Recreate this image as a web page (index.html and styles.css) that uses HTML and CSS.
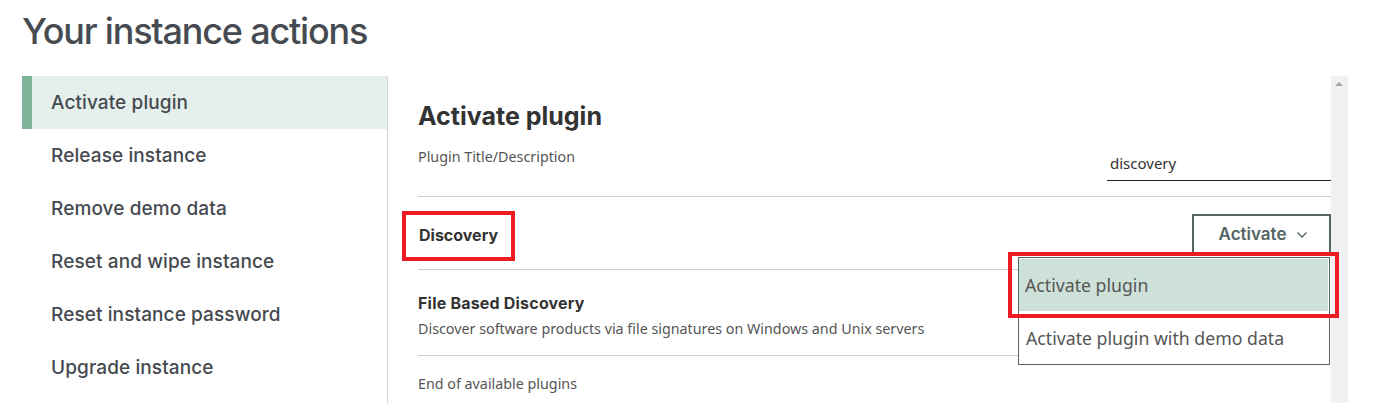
FILE: index.html
```html
<!DOCTYPE html>
<html>
<head>
<meta charset="utf-8">
<link rel="stylesheet" href="styles.css">
</head>
<body>
<h1 class="page-title">Your instance actions</h1>
<div class="layout">
  <nav class="sidebar">
    <div class="nav-item active">Activate plugin</div>
    <div class="nav-item">Release instance</div>
    <div class="nav-item">Remove demo data</div>
    <div class="nav-item">Reset and wipe instance</div>
    <div class="nav-item">Reset instance password</div>
    <div class="nav-item">Upgrade instance</div>
  </nav>
  <section class="panel">
    <div class="content">
      <h2 class="panel-title">Activate plugin</h2>
      <div class="filter-row">
        <label class="filter-label">Plugin Title/Description</label>
        <div class="filter-input">discovery</div>
      </div>
      <div class="group-row">
        <span class="group-name">Discovery</span>
        <div class="action-wrap">
          <button class="activate-btn">Activate
            <svg class="chev" width="12" height="8" viewBox="0 0 12 8"><path d="M1.5 1.5 L6 6 L10.5 1.5" fill="none" stroke="#556565" stroke-width="1.4"/></svg>
          </button>
          <ul class="menu">
            <li class="menu-item selected">Activate plugin</li>
            <li class="menu-item">Activate plugin with demo data</li>
          </ul>
        </div>
      </div>
      <div class="plugin-row">
        <div class="plugin-name">File Based Discovery</div>
        <div class="plugin-desc">Discover software products via file signatures on Windows and Unix servers</div>
      </div>
      <div class="end-row">End of available plugins</div>
    </div>
    <div class="scrollbar"><span class="arrow-up"></span></div>
  </section>
</div>
</body>
</html>
```

FILE: styles.css
```css
html, body {
  margin: 0;
  padding: 0;
  background: #fff;
  height: 403px;
  overflow: hidden;
}
body {
  padding: 0 26px 0 22px;
  font-family: "Inter", "Noto Sans", sans-serif;
  color: #3d4248;
}
.page-title {
  margin: 0;
  padding-top: 9px;
  height: 76px;
  box-sizing: border-box;
  font-size: 36px;
  font-weight: 500;
  line-height: 44px;
  color: #464b51;
  letter-spacing: -1.2px;
}
.layout {
  display: flex;
  height: 327px;
}
.sidebar {
  width: 365px;
  border-right: 1px solid #d4d4d4;
  flex: none;
}
.nav-item {
  height: 53px;
  display: flex;
  align-items: center;
  padding-left: 29px;
  font-size: 19px;
  font-weight: 500;
  letter-spacing: 0.1px;
  color: #454a50;
}
.nav-item.active {
  background: #e5efeb;
  border-left: 10px solid #7fb49b;
  padding-left: 19px;
}
.panel {
  flex: 1;
  display: flex;
}
.content {
  flex: 1;
  padding-left: 30px;
}
.scrollbar {
  width: 17px;
  background: #f1f1f1;
  flex: none;
  position: relative;
}
.arrow-up {
  position: absolute;
  left: 4px;
  top: 6px;
  width: 0;
  height: 0;
  border-left: 4px solid transparent;
  border-right: 4px solid transparent;
  border-bottom: 4px solid #a3a3a3;
}
.panel-title {
  margin: 0;
  padding-top: 26px;
  font-size: 25px;
  font-weight: 700;
  line-height: 28px;
  color: #333;
}
.filter-row {
  display: flex;
  justify-content: space-between;
  align-items: flex-start;
  height: 67px;
  box-sizing: border-box;
  border-bottom: 1px solid #cfcfcf;
}
.filter-label {
  margin-top: 18px;
  font-family: "Noto Sans", sans-serif;
  font-size: 14.3px;
  line-height: 18px;
  color: #555;
}
.filter-input {
  width: 224px;
  box-sizing: border-box;
  margin-top: 23px;
  padding-left: 3px;
  height: 28px;
  border-bottom: 1px solid #222;
  font-family: "Noto Sans", sans-serif;
  font-size: 15px;
  line-height: 20px;
  color: #333;
}
.group-row {
  height: 73px;
  box-sizing: border-box;
  border-bottom: 1px solid #cfcfcf;
  display: flex;
  align-items: flex-start;
  justify-content: space-between;
}
.group-name {
  position: relative;
  margin-left: 1px;
  margin-top: 28px;
  font-size: 16px;
  font-weight: 700;
  line-height: 20px;
  color: #333;
}
.group-name::after {
  content: "";
  position: absolute;
  top: -14px;
  bottom: -16px;
  left: -17px;
  right: -17px;
  border: 4px solid #ed1c24;
}
.action-wrap {
  position: relative;
  margin-top: 17px;
}
.activate-btn {
  width: 139px;
  height: 40px;
  border: 2px solid #556565;
  background: #fff;
  display: flex;
  align-items: center;
  justify-content: center;
  gap: 10px;
  font-family: "Inter", "Noto Sans", sans-serif;
  font-size: 17px;
  font-weight: 600;
  color: #556565;
  padding: 0 0 0 4px;
}
.chev {
  margin-top: 2px;
}
.menu {
  position: absolute;
  right: 1px;
  top: 43px;
  width: 312px;
  box-sizing: border-box;
  margin: 0;
  padding: 0;
  list-style: none;
  background: #fff;
  border: 1px solid #556565;
  z-index: 2;
}
.menu-item {
  position: relative;
  height: 53px;
  display: flex;
  align-items: center;
  padding-left: 7px;
  font-family: "Noto Sans", sans-serif;
  font-size: 17.7px;
  color: #555;
}
.menu-item.selected {
  background: #cde1d8;
  margin: 1px 1px 0 0;
  height: 52px;
  padding-left: 6px;
}
.menu-item.selected::after {
  content: "";
  position: absolute;
  top: -7px;
  bottom: -7px;
  left: -11px;
  right: -11px;
  border: 4px solid #ed1c24;
}
.plugin-row {
  height: 86px;
  border-bottom: 1px solid #cfcfcf;
  box-sizing: border-box;
  padding-top: 23px;
}
.plugin-name {
  font-size: 16px;
  font-weight: 700;
  line-height: 20px;
  letter-spacing: 0.2px;
  color: #333;
}
.plugin-desc {
  margin-top: 7px;
  font-family: "Noto Sans", sans-serif;
  font-size: 14.3px;
  line-height: 18px;
  color: #555;
}
.end-row {
  padding-top: 19px;
  font-family: "Noto Sans", sans-serif;
  font-size: 14.3px;
  line-height: 18px;
  color: #555;
}
```
